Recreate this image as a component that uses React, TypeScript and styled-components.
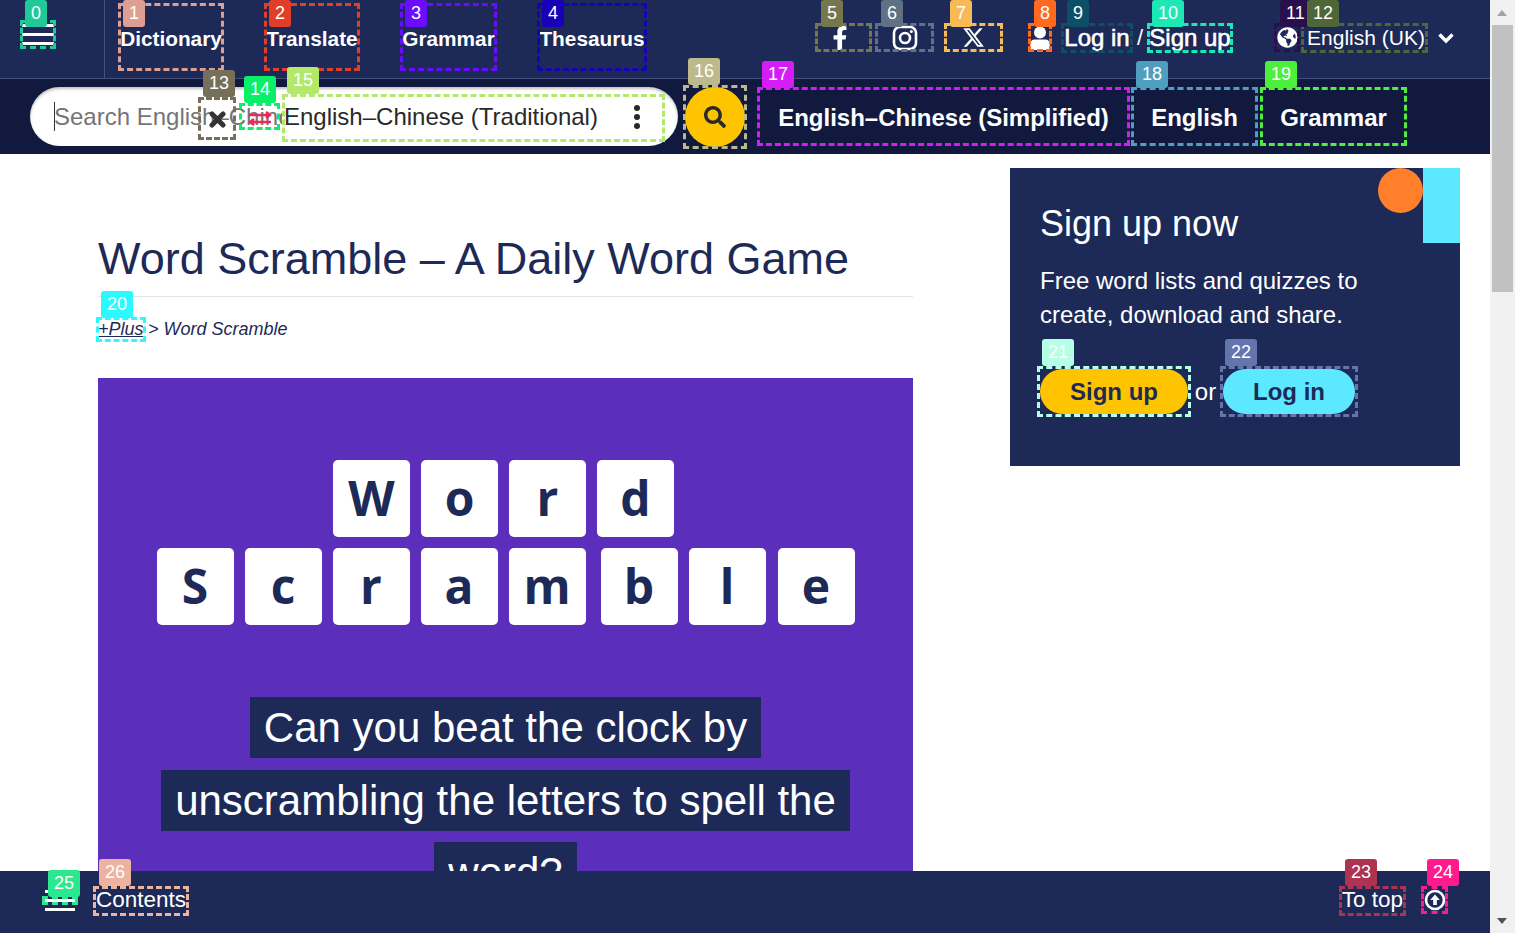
import React from "react";
import styled, {createGlobalStyle, css} from "styled-components";
import {FaFacebookF, FaSearch, FaGlobeAmericas} from "react-icons/fa";
import {FaXTwitter} from "react-icons/fa6";

const navy = "#1d2a57";
const deep = "#111a3e";

const GlobalStyle = createGlobalStyle`
    html, body {
        margin: 0;
        height: 100%;
        overflow: hidden;
        background: #fff;
    }
    * {
        box-sizing: border-box;
    }
    body {
        font-family: "Liberation Sans", Arial, sans-serif;
        color: ${navy};
    }
`;

// dashed box drawn over an element, the tag sits on it
const marked = css<{ $mark: string }>`
    position: relative;
    &::after {
        content: "";
        position: absolute;
        inset: 0;
        border: 3px dashed ${p => p.$mark};
        pointer-events: none;
    }
`;

const Tag = styled.span<{ $bg: string; $top?: number; $left?: number }>`
    position: absolute;
    top: ${p => p.$top ?? -27}px;
    left: ${p => p.$left ?? 5}px;
    height: 27px;
    padding: 0 6px;
    border-radius: 3px;
    background: ${p => p.$bg};
    color: #fff;
    font: 400 18px/27px "Liberation Sans", Arial, sans-serif;
    -webkit-text-stroke: 0;
    z-index: 5;
`;

const Page = styled.div`
    display: flex;
    height: 933px;
    width: 1515px;
    overflow: hidden;
`;

const Main = styled.div`
    width: 1490px;
    display: flex;
    flex-direction: column;
    height: 100%;
`;

const TopBar = styled.header`
    height: 79px;
    flex-shrink: 0;
    display: flex;
    background: ${navy};
    border-bottom: 1px solid #444f7c;
`;

const MenuCell = styled.div`
    width: 105px;
    padding: 20px 0 0 20px;
    border-right: 1px solid #444f7c;
`;

const TopBurger = styled.button<{ $mark: string }>`
    ${marked};
    display: flex;
    flex-direction: column;
    justify-content: center;
    gap: 6px;
    width: 36px;
    height: 29px;
    padding: 0 2px;
    border: none;
    background: none;
    span.bar {
        display: block;
        height: 3px;
        background: #fff;
    }
`;

const MainNav = styled.nav`
    display: flex;
    gap: 40px;
    padding: 3px 0 0 13px;
`;

const NavItem = styled.a<{ $mark: string; $w: number }>`
    ${marked};
    display: flex;
    align-items: center;
    justify-content: center;
    width: ${p => p.$w}px;
    height: 68px;
    padding-top: 3px;
    color: #fff;
    font-size: 20.8px;
    font-weight: 700;
`;

const UserNav = styled.div`
    display: flex;
    align-items: flex-start;
    margin-left: 168px;
    padding-top: 23px;
`;

const Social = styled.a<{ $mark: string; $w: number; $after: number; $nudge?: number }>`
    ${marked};
    display: flex;
    align-items: center;
    justify-content: center;
    width: ${p => p.$w}px;
    height: 29px;
    margin-right: ${p => p.$after}px;
    padding-right: ${p => p.$nudge ?? 0}px;
    color: #fff;
`;

const GlobeLink = styled(Social)`
    margin-left: 41px;
`;

const UserText = styled.a<{ $mark: string; $w: number }>`
    ${marked};
    display: flex;
    align-items: center;
    justify-content: center;
    width: ${p => p.$w}px;
    height: 30px;
    color: #fff;
    font-size: 24px;
    font-weight: 400;
    white-space: nowrap;
    -webkit-text-stroke: 0.6px #fff;
`;

const Slash = styled.span`
    width: 14px;
    text-align: center;
    color: #fff;
    font-size: 22px;
    line-height: 30px;
`;

const LanguageText = styled(UserText)`
    -webkit-text-stroke: 0;
    padding-left: 3px;
    font-size: 21px;
`;

const Caret = styled.span`
    display: flex;
    align-items: center;
    height: 30px;
    margin-left: 10px;
`;

const SearchBar = styled.div`
    height: 75px;
    flex-shrink: 0;
    display: flex;
    align-items: center;
    padding-left: 30px;
    background: ${deep};
`;

const Pill = styled.form`
    display: flex;
    align-items: center;
    width: 648px;
    height: 59px;
    padding-left: 24px;
    border-radius: 30px;
    background: #fff;
    box-shadow: inset 0 2px 3px rgba(0, 0, 0, 0.25);
`;

const InputWrap = styled.div`
    position: relative;
    width: 228px;
    height: 48px;
    display: flex;
    align-items: center;
`;

const SearchInput = styled.input`
    width: 100%;
    height: 29px;
    padding: 0;
    border: none;
    box-shadow: inset 1px 0 0 #333;
    outline: none;
    background: transparent;
    font: 400 24px "Liberation Sans", Arial, sans-serif;
    &::placeholder {
        color: #757575;
        opacity: 1;
    }
`;

const ClearBtn = styled.button<{ $mark: string }>`
    ${marked};
    position: absolute;
    left: 144px;
    top: 4px;
    display: flex;
    align-items: center;
    justify-content: center;
    width: 38px;
    height: 43px;
    padding: 3px 0 0;
    border: none;
    background: none;
`;

const SwapBtn = styled.button<{ $mark: string }>`
    ${marked};
    position: absolute;
    left: 185px;
    top: 10px;
    display: flex;
    align-items: center;
    justify-content: center;
    width: 41px;
    height: 27px;
    padding: 4px 0 0;
    border: none;
    background: none;
`;

const LangSelect = styled.div<{ $mark: string }>`
    ${marked};
    display: flex;
    align-items: center;
    justify-content: space-between;
    width: 383px;
    height: 48px;
    margin-top: 2px;
    padding: 0 25px 2px 2px;
    background: #fff;
    color: #292929;
    font-size: 24px;
`;

const Dots = styled.span`
    display: flex;
    flex-direction: column;
    gap: 3px;
    i {
        display: block;
        width: 6px;
        height: 6px;
        border-radius: 50%;
        background: #292929;
    }
`;

const SearchWrap = styled.div<{ $mark: string }>`
    ${marked};
    display: flex;
    align-items: center;
    justify-content: center;
    width: 64px;
    height: 64px;
    margin-left: 5px;
`;

const SearchBtn = styled.button`
    display: flex;
    align-items: center;
    justify-content: center;
    width: 60px;
    height: 60px;
    padding: 0;
    border: none;
    border-radius: 50%;
    background: #fec400;
    color: #292929;
    font-size: 22px;
`;

const Tab = styled.a<{ $mark: string; $w: number; $before: number }>`
    ${marked};
    display: flex;
    align-items: center;
    justify-content: center;
    width: ${p => p.$w}px;
    height: 59px;
    margin-left: ${p => p.$before}px;
    padding-top: 2px;
    color: #fff;
    font-size: 24px;
    font-weight: 700;
`;

const Content = styled.div`
    flex: 1;
    min-height: 0;
    display: flex;
    align-items: flex-start;
    padding: 14px 0 0 98px;
    overflow: hidden;
`;

const Article = styled.article`
    width: 815px;
    padding-top: 59px;
`;

const Title = styled.h1`
    margin: 0;
    padding-bottom: 5px;
    border-bottom: 1px solid #e3e3ea;
    font-size: 45px;
    line-height: 64px;
    font-weight: 400;
    color: ${navy};
`;

const Crumbs = styled.div`
    display: flex;
    align-items: center;
    height: 25px;
    margin-top: 20px;
    font-size: 18px;
    font-style: italic;
    white-space: pre;
`;

const PlusLink = styled.a<{ $mark: string }>`
    ${marked};
    display: block;
    width: 50px;
    height: 25px;
    margin: 0 -3px 0 -2px;
    padding: 2px 0 0 2px;
    text-decoration: underline;
    line-height: 20px;
`;

const GamePanel = styled.section`
    margin-top: 36px;
    padding: 82px 0 0;
    height: 600px;
    background: #5b2fbb;
    text-align: center;
`;

const TileRow = styled.div<{ $shift?: number }>`
    display: flex;
    justify-content: center;
    gap: 11px;
    margin-bottom: 11px;
    padding-right: ${p => p.$shift ?? 0}px;
`;

const Tile = styled.span<{ $extra?: number }>`
    display: flex;
    align-items: center;
    justify-content: center;
    width: 77px;
    height: 77px;
    margin-left: ${p => p.$extra ?? 0}px;
    padding-bottom: 3px;
    border-radius: 5px;
    background: #fff;
    color: ${navy};
    font: 700 48px "Open Sans", sans-serif;
`;

const Blurb = styled.p`
    margin: 67px 60px 0;
    font-size: 42px;
    line-height: 72.5px;
    color: #fff;
    span {
        padding: 7px 14px;
        background: ${navy};
        -webkit-box-decoration-break: clone;
        box-decoration-break: clone;
    }
`;

const SignupCard = styled.aside`
    position: relative;
    width: 450px;
    height: 298px;
    margin-left: 97px;
    padding: 32px 30px 0;
    flex-shrink: 0;
    background: ${navy};
    color: #fff;
`;

const CardCircle = styled.span`
    position: absolute;
    top: 0;
    right: 37px;
    width: 45px;
    height: 45px;
    border-radius: 50%;
    background: #ff7f2a;
`;

const CardStripe = styled.span`
    position: absolute;
    top: 0;
    right: 0;
    width: 37px;
    height: 75px;
    background: #5ce8ff;
`;

const CardTitle = styled.h2`
    margin: 0;
    font-size: 36px;
    line-height: 48px;
    font-weight: 400;
`;

const CardText = styled.p`
    margin: 16px 0 0;
    font-size: 24px;
    line-height: 34px;
`;

const CardActions = styled.div`
    display: flex;
    align-items: center;
    margin: 34px 0 0 -3px;
    font-size: 24px;
`;

const ActionBox = styled.div<{ $mark: string }>`
    ${marked};
    padding: 3px;
`;

const ActionBtn = styled.a<{ $bg: string; $w: number }>`
    display: flex;
    align-items: center;
    justify-content: center;
    width: ${p => p.$w}px;
    height: 45px;
    border-radius: 23px;
    background: ${p => p.$bg};
    color: ${navy};
    font-weight: 700;
`;

const Or = styled.span`
    width: 29px;
    text-align: center;
`;

const Footer = styled.footer`
    position: relative;
    height: 62px;
    flex-shrink: 0;
    display: flex;
    align-items: flex-start;
    padding: 15px 0 0 42px;
    background: ${navy};
    color: #fff;
    z-index: 3;
`;

const FootBurger = styled.button<{ $mark: string }>`
    ${marked};
    width: 36px;
    height: 9px;
    margin-top: 10px;
    padding: 0;
    border: none;
    background: none;
    i {
        position: absolute;
        left: 3px;
        right: 3px;
        height: 3px;
        background: #fff;
    }
    i:nth-of-type(1) {
        top: -6px;
    }
    i:nth-of-type(2) {
        top: 3px;
    }
    i:nth-of-type(3) {
        top: 12px;
    }
`;

const FootLink = styled.a<{ $mark: string; $w: number }>`
    ${marked};
    display: flex;
    align-items: center;
    justify-content: center;
    width: ${p => p.$w}px;
    height: 30px;
    padding-bottom: 2px;
    font-size: 22.5px;
`;

const ContentsLink = styled(FootLink)`
    margin-left: 15px;
`;

const TopLink = styled(FootLink)`
    margin-left: auto;
`;

const TopIcon = styled.a<{ $mark: string }>`
    ${marked};
    display: flex;
    align-items: center;
    justify-content: center;
    width: 27px;
    height: 28px;
    margin: 0 42px 0 15px;
`;

const Scrollbar = styled.div`
    position: relative;
    width: 25px;
    height: 100%;
    background: #f1f1f1;
    padding: 25px 2px 0;
`;

const Thumb = styled.div`
    height: 267px;
    background: #c1c1c1;
`;

const ScrollArrow = styled.span<{ $down?: boolean }>`
    position: absolute;
    left: 7px;
    width: 0;
    height: 0;
    border-left: 5px solid transparent;
    border-right: 5px solid transparent;
    ${p => p.$down
            ? `bottom: 9px; border-top: 6px solid #505050;`
            : `top: 10px; border-bottom: 6px solid #a3a3a3;`}
`;

const InstaIcon = () => (
    <svg width="26" height="26" viewBox="0 0 26 26" fill="none" stroke="#fff" strokeWidth="2.6">
        <rect x="2" y="2" width="22" height="22" rx="6"/>
        <circle cx="13" cy="13" r="5"/>
        <circle cx="19.4" cy="6.6" r="1.5" fill="#fff" stroke="none"/>
    </svg>
);

const PersonIcon = () => (
    <svg width="20" height="24" viewBox="0 0 20 24" fill="#fff">
        <circle cx="10" cy="6.5" r="6"/>
        <path d="M5 13.500h10c3 0 5 2 5 5V22a2 2 0 0 1-2 2H2a2 2 0 0 1-2-2v-3.500c0-3 2-5 5-5Z"/>
    </svg>
);

const ChevronIcon = () => (
    <svg width="16" height="11" viewBox="0 0 16 11" fill="none" stroke="#fff" strokeWidth="3.4">
        <path d="M1.500 1.500 8 8l6.500-6.500"/>
    </svg>
);

const CrossIcon = () => (
    <svg width="17" height="17" viewBox="0 0 17 17" stroke="#333" strokeWidth="5" strokeLinecap="round">
        <path d="M3 3 14 14M14 3 3 14"/>
    </svg>
);

const SwapIcon = () => (
    <svg width="24" height="15" viewBox="0 0 24 15" fill="none" stroke="#f0285a" strokeWidth="2.4">
        <path d="M1 4H22M18 1l4 3-4 3"/>
        <path d="M23 11H2M6 8l-4 3 4 3"/>
    </svg>
);

const UpIcon = () => (
    <svg width="22" height="22" viewBox="0 0 22 22">
        <circle cx="11" cy="11" r="9" fill="none" stroke="#fff" strokeWidth="2.6"/>
        <path d="M11 5.500 15.800 11H12.800V16H9.200V11H6.200Z" fill="#fff"/>
    </svg>
);

const rowOne = ["W", "o", "r", "d"];
const rowTwo = ["S", "c", "r", "a", "m", "b", "l", "e"];

const App = () => {
    return (
        <Page>
            <GlobalStyle/>
            <Main>
                <TopBar>
                    <MenuCell>
                        <TopBurger $mark="#1fc99a">
                            <Tag $bg="#1fc99a" $top={-20}>0</Tag>
                            <span className="bar"/>
                            <span className="bar"/>
                            <span className="bar"/>
                        </TopBurger>
                    </MenuCell>
                    <MainNav>
                        <NavItem $mark="#dc9f92" $w={106}><Tag $bg="#dc9f92" $top={-3}>1</Tag>Dictionary</NavItem>
                        <NavItem $mark="#e03e27" $w={96}><Tag $bg="#e03e27" $top={-3}>2</Tag>Translate</NavItem>
                        <NavItem $mark="#6a0dff" $w={97}><Tag $bg="#6a0dff" $top={-3}>3</Tag>Grammar</NavItem>
                        <NavItem $mark="#1800b8" $w={110}><Tag $bg="#1800b8" $top={-3}>4</Tag>Thesaurus</NavItem>
                    </MainNav>
                    <UserNav>
                        <Social $mark="#77774e" $w={57} $after={3} $nudge={8}><Tag $bg="#77774e" $top={-23} $left={6}>5</Tag><FaFacebookF size={24}/></Social>
                        <Social $mark="#5f7285" $w={59} $after={10}><Tag $bg="#5f7285" $top={-23} $left={6}>6</Tag><InstaIcon/></Social>
                        <Social $mark="#f9b955" $w={59} $after={25}><Tag $bg="#f9b955" $top={-23} $left={6}>7</Tag><FaXTwitter size={23}/></Social>
                        <Social $mark="#ff6a1f" $w={24} $after={9}><Tag $bg="#ff6a1f" $top={-23} $left={6}>8</Tag><PersonIcon/></Social>
                        <UserText $mark="#0c4f66" $w={72}><Tag $bg="#0c4f66" $top={-23} $left={6}>9</Tag>Log in</UserText>
                        <Slash>/</Slash>
                        <UserText $mark="#1ce8b5" $w={86}><Tag $bg="#1ce8b5" $top={-23}>10</Tag>Sign up</UserText>
                        <GlobeLink $mark="#2a0f4f" $w={26} $after={1}>
                            <Tag $bg="#2a0f4f" $top={-23} $left={6}>11</Tag><FaGlobeAmericas size={21}/>
                        </GlobeLink>
                        <LanguageText $mark="#4f6638" $w={127}><Tag $bg="#4f6638" $top={-23} $left={6}>12</Tag>English (UK)</LanguageText>
                        <Caret><ChevronIcon/></Caret>
                    </UserNav>
                </TopBar>
                <SearchBar>
                    <Pill>
                        <InputWrap>
                            <SearchInput placeholder="Search English–Chinese (Traditional)"/>
                            <ClearBtn type="button" $mark="#76705a"><Tag $bg="#76705a">13</Tag><CrossIcon/></ClearBtn>
                            <SwapBtn type="button" $mark="#0aef6a"><Tag $bg="#0aef6a">14</Tag><SwapIcon/></SwapBtn>
                        </InputWrap>
                        <LangSelect $mark="#b3e86a">
                            <Tag $bg="#b3e86a">15</Tag>
                            English–Chinese (Traditional)
                            <Dots><i/><i/><i/></Dots>
                        </LangSelect>
                    </Pill>
                    <SearchWrap $mark="#bcb98a">
                        <Tag $bg="#bcb98a">16</Tag>
                        <SearchBtn type="button"><FaSearch/></SearchBtn>
                    </SearchWrap>
                    <Tab $mark="#d41cf5" $w={373} $before={10}><Tag $bg="#d41cf5" $top={-26}>17</Tag>English–Chinese (Simplified)</Tab>
                    <Tab $mark="#4f9ec0" $w={127} $before={1}><Tag $bg="#4f9ec0" $top={-26}>18</Tag>English</Tab>
                    <Tab $mark="#4cf03c" $w={147} $before={2}><Tag $bg="#4cf03c" $top={-26}>19</Tag>Grammar</Tab>
                </SearchBar>
                <Content>
                    <Article>
                        <Title>Word Scramble – A Daily Word Game</Title>
                        <Crumbs>
                            <PlusLink $mark="#2cf8ff"><Tag $bg="#2cf8ff" $top={-26}>20</Tag>+Plus</PlusLink>
                            {" > Word Scramble"}
                        </Crumbs>
                        <GamePanel>
                            <TileRow $shift={4}>
                                {rowOne.map((l, i) => <Tile key={i}>{l}</Tile>)}
                            </TileRow>
                            <TileRow>
                                {rowTwo.map((l, i) => <Tile key={i} $extra={l === "b" ? 4 : l === "e" ? 1 : 0}>{l}</Tile>)}
                            </TileRow>
                            <Blurb>
                                <span>Can you beat the clock by unscrambling the letters to spell the word?</span>
                            </Blurb>
                        </GamePanel>
                    </Article>
                    <SignupCard>
                        <CardCircle/>
                        <CardStripe/>
                        <CardTitle>Sign up now</CardTitle>
                        <CardText>Free word lists and quizzes to create, download and share.</CardText>
                        <CardActions>
                            <ActionBox $mark="#b5ffe6">
                                <Tag $bg="#b5ffe6">21</Tag>
                                <ActionBtn $bg="#fec400" $w={148}>Sign up</ActionBtn>
                            </ActionBox>
                            <Or>or</Or>
                            <ActionBox $mark="#6474ad">
                                <Tag $bg="#6474ad">22</Tag>
                                <ActionBtn $bg="#5ce8ff" $w={132}>Log in</ActionBtn>
                            </ActionBox>
                        </CardActions>
                    </SignupCard>
                </Content>
                <Footer>
                    <FootBurger $mark="#2be88f">
                        <i/><i/><i/>
                        <Tag $bg="#2be88f" $top={-26} $left={6}>25</Tag>
                    </FootBurger>
                    <ContentsLink $mark="#ecb49f" $w={96}><Tag $bg="#ecb49f" $left={6}>26</Tag>Contents</ContentsLink>
                    <TopLink $mark="#ae3350" $w={67}><Tag $bg="#ae3350" $left={6}>23</Tag>To top</TopLink>
                    <TopIcon $mark="#ff1a8e"><Tag $bg="#ff1a8e" $left={6}>24</Tag><UpIcon/></TopIcon>
                </Footer>
            </Main>
            <Scrollbar>
                <ScrollArrow/>
                <Thumb/>
                <ScrollArrow $down/>
            </Scrollbar>
        </Page>
    );
};

export default App;
